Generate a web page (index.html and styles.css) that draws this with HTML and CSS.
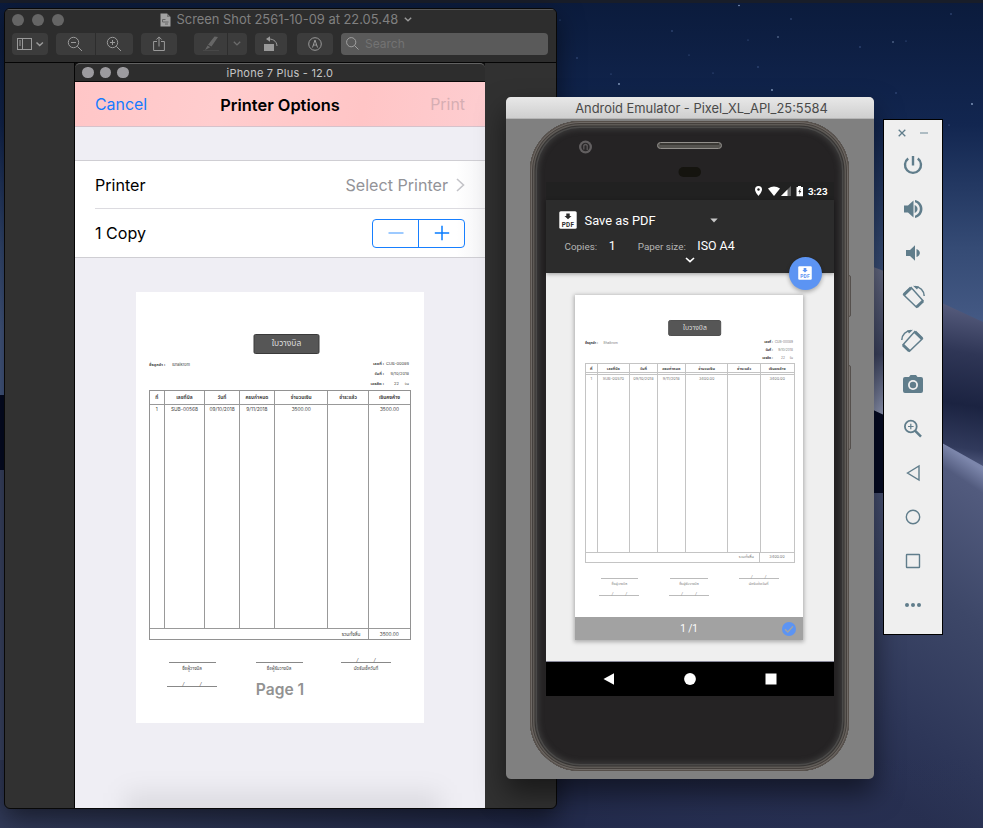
FILE: index.html
```
<!DOCTYPE html>
<html lang="en">
<head>
<meta charset="utf-8">
<title>Desktop</title>
<link rel="stylesheet" href="styles.css">
</head>
<body>
<main class="desktop">
  <svg class="wallpaper" viewBox="0 0 983 828" preserveAspectRatio="none" aria-hidden="true">
    <defs>
      <linearGradient id="sky" x1="0" y1="0" x2="0" y2="1"><stop offset="0" stop-color="#0b1b3c"/><stop offset=".15" stop-color="#122650"/><stop offset=".3" stop-color="#354b75"/><stop offset=".4" stop-color="#465b86"/></linearGradient>
      <linearGradient id="duneA" gradientUnits="userSpaceOnUse" x1="960" y1="300" x2="935" y2="470"><stop offset="0" stop-color="#5a6081"/><stop offset=".3" stop-color="#2f3656"/><stop offset=".6" stop-color="#1b2341"/><stop offset=".85" stop-color="#313a5c"/><stop offset="1" stop-color="#5f688d"/></linearGradient>
      <linearGradient id="duneB" gradientUnits="userSpaceOnUse" x1="962" y1="456" x2="782" y2="726"><stop offset="0" stop-color="#7c86ab"/><stop offset=".06" stop-color="#525b7e"/><stop offset=".4" stop-color="#3d4768"/><stop offset=".8" stop-color="#2d3658"/><stop offset="1" stop-color="#272f4f"/></linearGradient>
      <linearGradient id="duneC" gradientUnits="userSpaceOnUse" x1="0" y1="268" x2="0" y2="412"><stop offset="0" stop-color="#676c86"/><stop offset=".6" stop-color="#3d4461"/><stop offset="1" stop-color="#8f97b4"/></linearGradient>
      <linearGradient id="ground" x1="0" y1="0" x2="1" y2="0"><stop offset="0" stop-color="#323b5a"/><stop offset=".55" stop-color="#222a4a"/><stop offset="1" stop-color="#29325a" stop-opacity="0"/></linearGradient>
    </defs>
    <rect width="983" height="828" fill="url(#sky)"/>
    <path d="M0 395L10 395V480H0Z" fill="#050b24"/>
    <path d="M0 470H12V828H0Z" fill="#3b4565"/>
    <path d="M860 262L942 303L983 322V828H860Z" fill="url(#duneA)"/>
    <path d="M860 262L884 271V416L860 403Z" fill="url(#duneC)"/>
    <path d="M860 404L884 415V500H860Z" fill="#050b24"/>
    <path d="M10 760H860V493H900V425L942 443L983 466V828H10Z" fill="url(#duneB)"/>
    <rect y="760" width="983" height="68" fill="url(#ground)"/>
    <rect width="983" height="3" fill="#181d29"/>
    <g fill="#8aa0c4"><circle cx="619" cy="84" r=".9"/><circle cx="772" cy="90" r=".9"/><circle cx="739" cy="5.500" r=".8"/><circle cx="893" cy="42" r=".7"/><circle cx="972" cy="104" r=".9"/><circle cx="778" cy="37" r=".7"/></g>
    <g fill="#4c659a"><circle cx="577" cy="58" r=".7"/><circle cx="611" cy="74" r=".6"/><circle cx="672" cy="31" r=".7"/><circle cx="689" cy="55" r=".6"/><circle cx="748" cy="40" r=".6"/><circle cx="758" cy="67" r=".7"/><circle cx="791" cy="19" r=".7"/><circle cx="860" cy="47" r=".7"/><circle cx="906" cy="41" r=".6"/><circle cx="896" cy="93" r=".7"/><circle cx="951" cy="14" r=".7"/><circle cx="949" cy="125" r=".6"/><circle cx="560" cy="20" r=".6"/><circle cx="713" cy="73" r=".6"/></g>
  </svg>

  <section class="window preview">
    <header class="preview-head">
      <div class="preview-title">
        <div class="lights"><i></i><i></i><i></i></div>
        <div class="doc-title">
          <svg width="11" height="14" viewBox="0 0 11 14"><path d="M.5.500H7L10.500 4V13.500H.5Z" fill="#a3a3a3"/><path d="M7 .5V4H10.500" fill="#777"/><path d="M2.500 9V6.500h3M2.500 9h6M5 11h3" stroke="#666" fill="none"/></svg>
          <span>Screen Shot 2561-10-09 at 22.05.48</span>
          <svg width="8" height="5" viewBox="0 0 8 5"><path d="M.8.800L4 3.700L7.200.8" fill="none" stroke="#999" stroke-width="1.400"/></svg>
        </div>
      </div>
      <div class="preview-tools">
        <button class="tb sidebar"><svg width="27" height="12" viewBox="0 0 27 12" fill="none" stroke="#9a9a9a"><rect x=".5" y=".5" width="14" height="11"/><path d="M5.500.500V11.500M2 3h2M2 5h2M2 7h2"/><path d="M19.500 4.500L22.700 7.500L25.900 4.500" stroke-width="1.500"/></svg></button>
        <button class="tb zoom-out"><svg width="16" height="16" viewBox="0 0 16 16" fill="none" stroke="#9a9a9a"><circle cx="6.500" cy="6.500" r="5.200"/><path d="M4 6.500h5M10.300 10.300L15 15"/></svg></button>
        <button class="tb zoom-in"><svg width="16" height="16" viewBox="0 0 16 16" fill="none" stroke="#9a9a9a"><circle cx="6.500" cy="6.500" r="5.200"/><path d="M4 6.500h5M6.500 4v5M10.300 10.300L15 15"/></svg></button>
        <button class="tb share"><svg width="12" height="16" viewBox="0 0 12 16" fill="none" stroke="#9a9a9a"><path d="M4 5.500H.6V14.500H11.400V5.500H8M6 10.500V1M3.300 3.600L6 .9L8.700 3.600"/></svg></button>
        <button class="tb pen"><svg width="18" height="16" viewBox="0 0 18 16"><path d="M12.500 .5L16 1L9.500 10.500L6 8.700ZM5.500 9.500L8.300 11.300L3 14Z" fill="#666"/><path d="M1 14.500H17" stroke="#484848"/></svg></button>
        <button class="tb pen-menu"><svg width="8" height="5" viewBox="0 0 8 5"><path d="M.8.800L4 3.900L7.200.8" fill="none" stroke="#6b6b6b" stroke-width="1.400"/></svg></button>
        <button class="tb rotate"><svg width="16" height="16" viewBox="0 0 16 16"><path d="M1 8h10v7H1Z" fill="#999"/><path d="M4 3C9 2.500 13.800 4.500 14 10" fill="none" stroke="#999"/><path d="M3 3L7 .2V5.700Z" fill="#999"/></svg></button>
        <button class="tb markup"><svg width="14" height="14" viewBox="0 0 14 14" fill="none" stroke="#999"><circle cx="7" cy="7" r="6.300"/><path d="M4.500 10.500L7 3L9.500 10.500M5.500 9L7 7.500L8.500 9"/></svg></button>
        <div class="search"><svg width="13" height="13" viewBox="0 0 13 13" fill="none" stroke="#a0a0a0"><circle cx="5.200" cy="5.200" r="4.600"/><path d="M8.500 8.500L12.500 12.500"/></svg><span>Search</span></div>
      </div>
    </header>

    <div class="ios">
      <div class="ios-bar"><div class="lights"><i></i><i></i><i></i></div><span>iPhone 7 Plus - 12.0</span></div>
      <nav class="ios-nav"><span class="cancel">Cancel</span><strong>Printer Options</strong><span class="print">Print</span></nav>
      <div class="ios-list">
        <div class="ios-row"><span class="lbl-printer">Printer</span><span class="select">Select Printer</span><svg width="9" height="14" viewBox="0 0 9 14"><path d="M1 1L7.500 7L1 13" fill="none" stroke="#c3c3c8" stroke-width="1.600"/></svg></div>
        <div class="ios-row"><span class="lbl-copy">1 Copy</span><div class="stepper"><span><svg width="16" height="16" viewBox="0 0 16 16"><path d="M.5 8H15.500" stroke="#7db9ff" stroke-width="1.400"/></svg></span><span><svg width="16" height="16" viewBox="0 0 16 16"><path d="M.8 8H15.200M8 .8V15.200" stroke="#087cff" stroke-width="1.500"/></svg></span></div></div>
      </div>
      <div class="page">
        <article class="invoice">
          <h1>ใบวางบิล</h1>
          <div class="meta">
            <p class="customer"><b>ชื่อลูกค้า :</b><span>Bhaikrom</span></p>
            <dl><dt>เลขที่ :</dt><dd>CUB-00089</dd><dt>วันที่ :</dt><dd>9/10/2018</dd><dt>เครดิต :</dt><dd>22 &nbsp; &nbsp; วัน</dd></dl>
          </div>
          <div class="bill">
            <div class="cols head"><b>ที่</b><b>เลขที่บิล</b><b>วันที่</b><b>ครบกำหนด</b><b>จำนวนเงิน</b><b>ชำระแล้ว</b><b>เงินคงค้าง</b></div>
            <div class="cols item"><span>1</span><span>SUB-00568</span><span>09/10/2018</span><span>9/11/2018</span><span>3500.00</span><span></span><span>3500.00</span></div>
            <div class="total"><span>รวมทั้งสิ้น</span><span>3500.00</span></div>
          </div>
          <div class="signs">
            <div><i class="rule"></i><span>ชื่อผู้วางบิล</span><i class="rule date"><u>/</u><u>/</u></i></div>
            <div><i class="rule"></i><span>ชื่อผู้รับวางบิล</span></div>
            <div><i class="rule date"><u>/</u><u>/</u></i><span>นัดรับเช็ควันที่</span></div>
          </div>
        </article>
        <div class="page-label">Page 1</div>
      </div>
      <div class="ios-shade"></div>
    </div>
  </section>

  <section class="window emulator">
    <i class="side-key power"></i><i class="side-key volume"></i>
    <header class="emu-head">Android Emulator - Pixel_XL_API_25:5584</header>
    <div class="emu-body">
      <div class="phone">
        <div class="phone-top">
          <svg width="288" height="50" viewBox="0 0 288 50"><circle cx="39.500" cy="15" r="6.500" fill="#625f60"/><circle cx="39.500" cy="15" r="4.200" fill="#2a2829"/><path d="M37.800 17.500V13.500Q39.500 11.500 41.200 13.500V18" fill="none" stroke="#5d5a5b" stroke-width="1.300"/><rect x="111.500" y="10.500" width="64" height="6" rx="3" fill="#55534f" stroke="#93908c"/><path d="M114 12h59" stroke="#25221f"/><rect x="132.500" y="35" width="22.500" height="10" rx="5" fill="#15140f"/></svg>
        </div>
        <div class="screen">
          <div class="status">
            <svg width="50" height="12" viewBox="0 0 50 12"><path d="M3.500 1a3.500 3.500 0 0 1 3.500 3.500C7 7 3.500 11 3.500 11S0 7 0 4.500A3.500 3.500 0 0 1 3.500 1Z" fill="#fff"/><circle cx="3.500" cy="4.500" r="1.200" fill="#222"/><path d="M13 3.500Q19 -.7 25 3.500L19 11Z" fill="#fff"/><path d="M36 1V11H26Z" fill="#686868"/><path d="M32.500 4.500V11H26Z" fill="#fff"/><path d="M41.500 2H43V1H46V2H48V11.300H41.500Z" fill="#fff"/><path d="M45.500 3.500L43.300 7H44.600L44 9.500L46.400 6H45Z" fill="#222"/></svg>
            <span>3:23</span>
          </div>
          <div class="print-head">
            <div class="dest"><svg class="pdf" width="18" height="18" viewBox="0 0 18 18"><rect x=".3" y=".3" width="17.400" height="17.400" rx="1.500" fill="#fff"/><path d="M7.300 2.500H10.700V5H12.500L9 8.300L5.500 5H7.300Z" fill="#2c2c2c"/><text x="9" y="15.500" text-anchor="middle">PDF</text></svg><span>Save as PDF</span><svg width="8" height="5" viewBox="0 0 8 5"><path d="M.3.500H7.700L4 4.500Z" fill="#c8c8c8"/></svg></div>
            <div class="opts"><small>Copies:</small><span>1</span><small class="paper">Paper size:</small><span>ISO A4</span></div>
            <svg class="expand" width="10" height="6" viewBox="0 0 10 6"><path d="M1 1L5 4.700L9 1" fill="none" stroke="#fff" stroke-width="1.600"/></svg>
            <div class="fab"><svg class="pdf" width="14" height="14" viewBox="0 0 18 18"><rect x=".3" y=".3" width="17.400" height="17.400" rx="1.500" fill="#fff"/><path d="M7.300 2.500H10.700V5H12.500L9 8.300L5.500 5H7.300Z" fill="#5c94f3"/><text x="9" y="15.500" text-anchor="middle">PDF</text></svg></div>
          </div>
          <div class="preview-area">
            <div class="sheet">
              <article class="invoice small">
                <h1>ใบวางบิล</h1>
                <div class="meta">
                  <p class="customer"><b>ชื่อลูกค้า :</b><span>Bhaikrom</span></p>
                  <dl><dt>เลขที่ :</dt><dd>CUB-00089</dd><dt>วันที่ :</dt><dd>9/10/2018</dd><dt>เครดิต :</dt><dd>22 &nbsp; &nbsp; วัน</dd></dl>
                </div>
                <div class="bill">
                  <div class="cols head"><b>ที่</b><b>เลขที่บิล</b><b>วันที่</b><b>ครบกำหนด</b><b>จำนวนเงิน</b><b>ชำระแล้ว</b><b>เงินคงค้าง</b></div>
                  <div class="cols item"><span>1</span><span>SUB-00570</span><span>09/10/2018</span><span>9/11/2018</span><span>3400.00</span><span></span><span>3400.00</span></div>
                  <div class="total"><span>รวมทั้งสิ้น</span><span>3400.00</span></div>
                </div>
                <div class="signs">
                  <div><i class="rule"></i><span>ชื่อผู้วางบิล</span><i class="rule date"><u>/</u><u>/</u></i></div>
                  <div><i class="rule"></i><span>ชื่อผู้รับวางบิล</span><i class="rule date"><u>/</u><u>/</u></i></div>
                  <div><i class="rule date"><u>/</u><u>/</u></i><span>นัดรับเช็ควันที่</span></div>
                </div>
              </article>
              <footer class="sheet-foot"><span>1 /1</span><svg width="14" height="14" viewBox="0 0 14 14"><circle cx="7" cy="7" r="7" fill="#5c94f3"/><path d="M3 7.200L5.800 10L11 4.300" fill="none" stroke="#a3a3a3" stroke-width="1.300"/></svg></footer>
            </div>
          </div>
          <div class="android-nav">
            <svg width="12" height="12" viewBox="0 0 12 12"><path d="M.5 6L11 .2V11.800Z" fill="#fff"/></svg>
            <svg width="12" height="12" viewBox="0 0 12 12"><circle cx="6" cy="6" r="5.900" fill="#fff"/></svg>
            <svg width="12" height="12" viewBox="0 0 12 12"><rect x=".5" y=".5" width="11" height="11" fill="#fff"/></svg>
          </div>
        </div>
      </div>
    </div>
  </section>

  <aside class="toolbar">
    <div class="tool-top"><svg width="8" height="8" viewBox="0 0 8 8"><path d="M.7.700L7.300 7.300M7.300.700L.7 7.300" stroke="#607d8b" stroke-width="1.300"/></svg><svg width="8" height="8" viewBox="0 0 8 8"><path d="M0 4H8" stroke="#93a6b0" stroke-width="1.400"/></svg></div>
    <div class="tool"><svg width="24" height="24" viewBox="0 0 24 24"><path d="M12 3V12.500" stroke="#607d8b" stroke-width="2.400"/><path d="M7.200 5.500A8 8 0 1 0 16.800 5.500" fill="none" stroke="#607d8b" stroke-width="2.400"/></svg></div>
    <div class="tool"><svg width="24" height="24" viewBox="0 0 24 24" fill="#607d8b"><path d="M3 8.500V15.500H7L12.500 20.500V3.500L7 8.500ZM13.700 8C17.500 9.500 17.500 14.500 13.700 16ZM14 3C24 5 24 19 14 21V18.700C20.500 16.500 20.500 7.500 14 5.300Z"/></svg></div>
    <div class="tool"><svg width="24" height="24" viewBox="0 0 24 24" fill="#607d8b"><path d="M5 9V15H9L14 19.800V4.200L9 9ZM15.500 8C20 9.500 20 14.500 15.500 16Z"/></svg></div>
    <div class="tool"><svg width="24" height="24" viewBox="0 0 24 24" fill="none" stroke="#607d8b"><path d="M10.200 2.500L2.600 9.800L15.500 22.300L22 15.700Z" stroke-width="1.500"/><path d="M10 2.900L3 9.700M22 16L15.700 22" stroke-width="3"/><path d="M14 1.400C19 1.800 23 5.500 23.200 11" stroke-width="1.500"/><path d="M12 .8L18 1.500L16 4.500Z" fill="#607d8b" stroke="none"/></svg></div>
    <div class="tool"><svg class="flip" width="24" height="24" viewBox="0 0 24 24" fill="none" stroke="#607d8b"><path d="M10.200 2.500L2.600 9.800L15.500 22.300L22 15.700Z" stroke-width="1.500"/><path d="M10 2.900L3 9.700M22 16L15.700 22" stroke-width="3"/><path d="M14 1.400C19 1.800 23 5.500 23.200 11" stroke-width="1.500"/><path d="M12 .8L18 1.500L16 4.500Z" fill="#607d8b" stroke="none"/></svg></div>
    <div class="tool"><svg width="24" height="24" viewBox="0 0 24 24"><path d="M8 4L9.500 2H15L16.500 4H20Q22 4 22 6V18Q22 20 20 20H4Q2 20 2 18V6Q2 4 4 4Z" fill="#607d8b"/><circle cx="12" cy="12" r="5" fill="#efefef"/><circle cx="12" cy="12" r="3.200" fill="#607d8b"/></svg></div>
    <div class="tool"><svg width="24" height="24" viewBox="0 0 24 24" fill="none" stroke="#607d8b"><circle cx="9.800" cy="9.500" r="5.900" stroke-width="1.800"/><path d="M7 9.500H12.600M9.800 6.700V12.300" stroke-width="1.200"/><path d="M14 13.700L20 19.700" stroke-width="2.400"/></svg></div>
    <div class="tool"><svg width="24" height="24" viewBox="0 0 24 24"><path d="M6.500 12L18 5V19Z" fill="none" stroke="#607d8b" stroke-width="1.400"/></svg></div>
    <div class="tool"><svg width="24" height="24" viewBox="0 0 24 24"><circle cx="12" cy="12" r="6.700" fill="none" stroke="#607d8b" stroke-width="1.400"/></svg></div>
    <div class="tool"><svg width="24" height="24" viewBox="0 0 24 24"><rect x="5.500" y="5.500" width="13" height="13" rx=".5" fill="none" stroke="#607d8b" stroke-width="1.400"/></svg></div>
    <div class="tool"><svg width="24" height="24" viewBox="0 0 24 24" fill="#607d8b"><circle cx="6" cy="12" r="2"/><circle cx="12" cy="12" r="2"/><circle cx="18" cy="12" r="2"/></svg></div>
  </aside>
</main>
</body>
</html>
```
FILE: styles.css
```
* { box-sizing: border-box; }
body { margin: 0; overflow: hidden; background: #0c1a38; font-family: Inter, "Noto Sans", sans-serif; }
svg { display: block; flex: none; }
.desktop { position: relative; width: 983px; height: 828px; overflow: hidden; }
.wallpaper { position: absolute; inset: 0; width: 100%; height: 100%; }
.window { position: absolute; }

/* Preview window */
.preview { left: 4px; top: 8px; width: 553px; height: 801px; border: 1px solid #080808; border-radius: 6px; background: #313131; box-shadow: 0 10px 26px rgba(0,0,0,.5); overflow: hidden; }
.preview-head { height: 54px; background: #2d2d2d; border-top: 1px solid #565656; border-bottom: 1px solid #050505; }
.preview-title { display: flex; align-items: center; height: 19px; padding-left: 7px; }
.lights { display: flex; gap: 8px; }
.lights i { width: 12px; height: 12px; border-radius: 50%; background: #656565; }
.doc-title { display: flex; align-items: center; gap: 6px; margin-left: 95.500px; color: #808080; font-size: 12.900px; white-space: nowrap; }
.preview-tools { display: flex; height: 22px; margin-top: 4px; padding-left: 7px; }
.tb { display: flex; align-items: center; justify-content: center; height: 22px; padding: 0 0 1px; border: 0; border-radius: 4px; background: #3c3c3c; }
.sidebar { width: 36px; }
.zoom-out { width: 39px; margin-left: 8px; border-radius: 4px 0 0 4px; padding-right: 1px; }
.zoom-in { width: 37px; margin-left: 1px; border-radius: 0 4px 4px 0; padding-right: 2px; }
.share { width: 36px; margin-left: 8px; }
.pen { width: 33px; margin-left: 17px; border-radius: 4px 0 0 4px; }
.pen-menu { width: 19px; margin-left: 1px; border-radius: 0 4px 4px 0; padding-right: 2px; }
.rotate { width: 32px; margin-left: 8px; }
.markup { width: 36px; margin-left: 10px; }
.search { display: flex; align-items: center; gap: 6px; width: 207px; margin-left: 8px; padding: 0 0 1px 5px; border-radius: 4px; background: #5a5a5a; color: #737373; font-size: 12px; }

/* iPhone simulator */
.ios { position: relative; width: 411px; height: 746px; margin-left: 70px; margin-left: 69px; border-left: 1px solid #050505; background: #efeef4; overflow: hidden; }
.ios-bar { display: flex; align-items: center; height: 19px; padding-left: 7px; border-top: 1px solid #626262; border-bottom: 1px solid #080808; border-radius: 5px 5px 0 0; background: #2d2d2d; color: #c5c5c5; font-size: 11px; box-shadow: 0 -4px 0 #111; }
.ios-bar .lights { gap: 6px; }
.ios-bar .lights i { width: 11.500px; height: 11.500px; background: #9c9b9f; }
.ios-bar span { margin-left: 98px; letter-spacing: .22px; }
.ios-nav { display: grid; grid-template-columns: 1fr auto 1fr; align-items: center; height: 45px; padding: 1px 20px 0; border-bottom: 1px solid #d6c2cb; background: linear-gradient(100deg, #ffc6c7, #ffcdce 35%, #ffc5c6 70%, #fdcdd0); font-size: 15.900px; }
.cancel { color: #177bff; }
.print { color: #d6aeb3; text-align: right; }
.ios-nav strong { font-weight: 600; font-size: 16.400px; }
.ios-list { height: 98px; margin-top: 33px; padding-left: 20px; border-top: 1px solid #cfced3; border-bottom: 1px solid #cfced3; background: linear-gradient(90deg, #fff 93%, #f4f4f6); font-size: 16.100px; }
.ios-row { display: flex; align-items: center; height: 47px; padding-right: 20px; }
.ios-row + .ios-row { height: 49px; border-top: 1px solid #dcdbe0; }
.ios-row > span { margin-right: auto; }
.ios-row .select { margin-right: 8px; color: #939398; }
.stepper { display: flex; width: 93px; height: 29px; border: 1px solid #177fff; border-radius: 4px; }
.stepper span { display: flex; flex: 1; align-items: center; justify-content: center; }
.stepper span + span { border-left: 1px solid #177fff; }
.page { position: relative; width: 288px; height: 431px; margin: 34px 0 0 61px; padding: 42px 13px 0; background: #fff; }
.page-label { position: absolute; left: 0; right: 0; bottom: 23px; text-align: center; color: #929292; font-size: 15.600px; line-height: 20px; font-weight: 600; }
.ios-shade { position: absolute; left: 50px; bottom: -18px; width: 315px; height: 34px; background: rgba(0,0,0,.08); filter: blur(12px); }

/* Billing note, sized from one unit */
.invoice { --u: 1px; width: calc(262 * var(--u)); color: #444; font-family: Inter, "Noto Sans Thai", "Noto Sans", sans-serif; font-size: calc(4.800 * var(--u)); line-height: calc(8 * var(--u)); }
.invoice h1 { width: calc(66 * var(--u)); height: calc(19.500 * var(--u)); margin: 0 auto; border: 1px solid #3a3a3a; border-radius: 2px; background: #565656; color: #ddd; font-size: calc(8.500 * var(--u)); line-height: calc(17.500 * var(--u)); font-weight: 400; text-align: center; transform: translateX(calc(6.500 * var(--u))); }
.meta { display: flex; justify-content: space-between; height: calc(36.500 * var(--u)); padding: calc(6 * var(--u)) calc(2 * var(--u)) 0 0; font-size: calc(4 * var(--u)); }
.customer { display: flex; gap: calc(7 * var(--u)); margin: calc(1.500 * var(--u)) 0 0; }
.meta dl { display: grid; grid-template-columns: auto calc(25 * var(--u)); grid-auto-rows: calc(10 * var(--u)); margin: 0; text-align: right; white-space: nowrap; }
.meta dt { font-weight: 700; }
.meta dd { margin: 0; }
.bill { display: flex; flex-direction: column; height: calc(250 * var(--u)); border: 1px solid #929292; }
.cols { display: grid; grid-template-columns: 14.600fr 41fr 34.700fr 35.300fr 53.700fr 40.700fr 41.300fr; text-align: center; }
.cols > * { min-width: 0; overflow: visible; white-space: nowrap; border-right: 1px solid #999; }
.cols > :last-child { border-right: 0; }
.head { height: calc(14 * var(--u)); border-bottom: 1px solid #999; line-height: calc(13 * var(--u)); }
.item { flex: 1; line-height: calc(9.500 * var(--u)); }
.total { display: grid; grid-template-columns: 1fr calc(41.500 * var(--u)); height: calc(11.500 * var(--u)); border-top: 1px solid #999; line-height: calc(10 * var(--u)); text-align: center; }
.total span:first-child { padding-right: calc(7 * var(--u)); border-right: 1px solid #999; text-align: right; }
.signs { display: flex; justify-content: space-between; padding: calc(15 * var(--u)) calc(20 * var(--u)) 0 calc(18 * var(--u)); font-size: calc(4.500 * var(--u)); white-space: nowrap; }
.signs > div { display: flex; flex-direction: column; align-items: center; width: calc(50 * var(--u)); }
.signs span { padding-top: calc(2 * var(--u)); }
.rule { display: flex; align-items: flex-end; justify-content: space-evenly; width: calc(47 * var(--u)); height: calc(8 * var(--u)); border-bottom: 1px solid #888; }
.rule.date { width: calc(50 * var(--u)); }
.signs span + .rule { margin-top: calc(5.500 * var(--u)); }
.rule u { font-size: calc(5 * var(--u)); line-height: calc(4 * var(--u)); text-decoration: none; }

/* Android emulator */
.emulator { left: 506px; top: 97px; width: 368px; height: 682px; border-radius: 5px; background: #808080; box-shadow: 0 14px 28px rgba(0,0,0,.5); }
.emu-head { height: 22px; padding-left: 23px; border-bottom: 1px solid #b5b5b5; border-radius: 5px 5px 0 0; background: linear-gradient(#e8e8e8, #cfcfcf); color: #4a4a4a; font-size: 12.900px; line-height: 23px; text-align: center; white-space: nowrap; }
.emu-body { position: relative; padding: 2px 0 0 24px; }
.phone { width: 319px; height: 650px; padding: 11px 15.500px 0; border-radius: 50px; background: #252324; box-shadow: inset 0 0 0 1px #564f4a, inset 0 0 0 2px #6e6965, inset 0 0 0 3px #45403d, inset 0 0 0 4.500px #5e5a56, inset 0 0 0 5.500px #363433, inset 0 0 0 7px #4a4948, inset 0 0 5px 9px #3a3939; }
.phone-top { height: 50px; }
.screen { width: 288px; font-family: Roboto, sans-serif; color: #fff; }
.status { display: flex; align-items: center; justify-content: flex-end; gap: 3px; height: 18px; padding-right: 6px; background: #212121; font-size: 9.800px; font-weight: 700; }
.print-head { position: relative; height: 73px; padding: 11px 13px 0; background: #2c2c2c; z-index: 1; box-shadow: 0 1px 4px rgba(0,0,0,.35); }
.dest { display: flex; align-items: center; gap: 8px; height: 18px; font-size: 12.850px; }
.dest > svg:last-child { margin-left: 46px; }
.pdf text { font: 700 6.300px Roboto, sans-serif; fill: #2c2c2c; letter-spacing: .3px; }
.opts { display: flex; align-items: baseline; height: 17px; margin-top: 9px; padding-left: 6px; font-size: 12.400px; line-height: 16px; }
.opts small { margin-right: 11.500px; color: #b5b5b5; font-size: 9.900px; }
.opts .paper { margin-left: 22px; margin-right: 11.500px; }
.expand { margin: 2px auto 0; }
.fab { position: absolute; right: 11.500px; bottom: -17px; display: flex; align-items: center; justify-content: center; width: 33.500px; height: 33.500px; border-radius: 50%; background: #5c94f3; box-shadow: 0 2px 4px rgba(0,0,0,.3); }
.fab .pdf text { fill: #5c94f3; }
.preview-area { height: 389px; padding: 22px 0 0 29.500px; background: #efefef; border-bottom: 1px solid #889; }
.sheet { display: flex; flex-direction: column; width: 228px; height: 345px; background: #fff; box-shadow: 0 1px 4px 1px rgba(0,0,0,.28); }
.small { --u: .8px; flex: 1; padding-top: 25px; margin-left: 10px; color: #777; }
.small h1 { border-color: #505050; }
.small .meta { height: 27px; padding-top: 3.500px; }
.small .bill, .small .cols, .small .cols > *, .small .total, .small .total span:first-child { border-color: #c4c4c4; }
.small .head { border-bottom: 3px double #c4c4c4; }
.small .head b { color: #444; }
.small .meta b, .small dt { color: #333; }
.small .rule { border-color: #bbb; }
.small .signs { padding-top: 10px; }
.small .signs span + .rule { margin-top: 3px; }
.sheet-foot { display: flex; align-items: center; justify-content: flex-end; height: 23px; padding-right: 7px; background: #a2a2a2; font-size: 10px; }
.sheet-foot span { margin-right: 84px; }
.android-nav { display: flex; align-items: center; justify-content: space-between; height: 34px; padding: 0 57px; background: #000; }
.side-key { position: absolute; left: 341px; width: 4px; border: 1px solid #55504d; border-radius: 0 2px 2px 0; background: #77726e; }
.power { top: 178px; height: 42px; }
.volume { top: 268px; height: 85px; }

/* Emulator control strip */
.toolbar { position: absolute; left: 883px; top: 119px; width: 60px; height: 516px; border: 1px solid #000; background: #efefef; }
.tool-top { display: flex; justify-content: center; gap: 14px; height: 23px; padding-top: 9px; }
.tool { display: flex; align-items: center; justify-content: center; height: 44px; }
.flip { transform: scaleX(-1); }
```
